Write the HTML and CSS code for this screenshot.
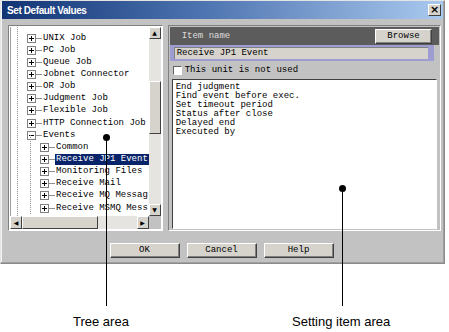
FILE: index.html
```html
<!DOCTYPE html>
<html>
	<head>
		<link rel="stylesheet" href="styles.css">
	</head>
	<body>
	<div class="page">
		<div class="dialog">
			<div class="titlebar">
				<span class="title">Set Default Values</span>
				<span class="closeBtn">&#215;</span>
			</div>
			<div class="main">
				<div class="treePanel">
					<div class="treeView">
						<div class="rootLine"></div>
						<div class="row"><span class="box plus"></span><span class="dash"></span><span class="label">UNIX Job</span></div>
						<div class="row"><span class="box plus"></span><span class="dash"></span><span class="label">PC Job</span></div>
						<div class="row"><span class="box plus"></span><span class="dash"></span><span class="label">Queue Job</span></div>
						<div class="row"><span class="box plus"></span><span class="dash"></span><span class="label">Jobnet Connector</span></div>
						<div class="row"><span class="box plus"></span><span class="dash"></span><span class="label">OR Job</span></div>
						<div class="row"><span class="box plus"></span><span class="dash"></span><span class="label">Judgment Job</span></div>
						<div class="row"><span class="box plus"></span><span class="dash"></span><span class="label">Flexible Job</span></div>
						<div class="row"><span class="box plus"></span><span class="dash"></span><span class="label">HTTP Connection Job</span></div>
						<div class="row"><span class="box minus"></span><span class="dash"></span><span class="label">Events</span></div>
						<div class="children">
							<div class="row sub"><span class="box plus"></span><span class="dash"></span><span class="label">Common</span></div>
							<div class="row sub"><span class="box plus"></span><span class="dash"></span><span class="label selected">Receive JP1 Event</span></div>
							<div class="row sub"><span class="box plus"></span><span class="dash"></span><span class="label">Monitoring Files</span></div>
							<div class="row sub"><span class="box plus"></span><span class="dash"></span><span class="label">Receive Mail</span></div>
							<div class="row sub"><span class="box plus"></span><span class="dash"></span><span class="label">Receive MQ Messag</span></div>
							<div class="row sub"><span class="box plus"></span><span class="dash"></span><span class="label">Receive MSMQ Mess</span></div>
						</div>
					</div>
					<div class="vscroll">
						<span class="arrowBtn">&#9650;</span>
						<span class="vtrack"><span class="vthumb"></span></span>
						<span class="arrowBtn">&#9660;</span>
					</div>
					<div class="hscroll">
						<span class="arrowBtn">&#9664;</span>
						<span class="htrack"><span class="hthumb"></span></span>
						<span class="arrowBtn">&#9654;</span>
					</div>
					<div class="corner"></div>
				</div>
				<div class="settingPanel">
					<div class="itemHeader">
						<span class="itemName">Item name</span>
						<span class="btn browseBtn">Browse</span>
					</div>
					<div class="nameFrame">
						<div class="nameInput">Receive JP1 Event</div>
					</div>
					<div class="checkRow">
						<span class="checkbox"></span>
						<span>This unit is not used</span>
					</div>
					<div class="itemList">
						<div>End judgment</div>
						<div>Find event before exec.</div>
						<div>Set timeout period</div>
						<div>Status after close</div>
						<div>Delayed end</div>
						<div>Executed by</div>
					</div>
				</div>
			</div>
			<div class="buttons">
				<span class="btn">OK</span>
				<span class="btn">Cancel</span>
				<span class="btn">Help</span>
			</div>
		</div>

		<div class="callout treeCallout">
			<span class="dot"></span>
			<span class="stem"></span>
		</div>
		<div class="callout settingCallout">
			<span class="dot"></span>
			<span class="stem"></span>
		</div>
		<div class="captions">
			<span class="caption treeCaption">Tree area</span>
			<span class="caption settingCaption">Setting item area</span>
		</div>
	</div>
	</body>
</html>
```

FILE: styles.css
```css
body{
	margin: 0;
	background-color: #ffffff;
	font-family: "Liberation Mono", monospace;
	font-size: 9px;
	color: #000000;
}
.page{
	position: relative;
	width: 449px;
	height: 332px;
}
.dialog{
	width: 445px;
	height: 264px;
	box-sizing: border-box;
	background-color: #c2c2c2;
	border: 1px solid #8a8a8a;
	border-top-color: #e4e4e4;
	border-left-color: #e4e4e4;
	box-shadow: inset -1px -1px 0 #a0a0a0, inset 1px 1px 0 #f4f4f4;
	display: flex;
	flex-direction: column;
}
.titlebar{
	height: 18px;
	margin: 0 1px;
	background: linear-gradient(to right, #123474 0%, #4d73b0 45%, #a9c9ee 100%);
	display: flex;
	align-items: center;
	justify-content: space-between;
	padding: 0 2px 0 5px;
}
.title{
	font-family: "Liberation Sans", Arial, sans-serif;
	font-weight: bold;
	font-size: 10px;
	letter-spacing: -0.4px;
	color: #ffffff;
}
.closeBtn{
	width: 13px;
	height: 12px;
	box-sizing: border-box;
	background-color: #d6d3cc;
	border: 1px solid #404040;
	border-top-color: #ffffff;
	border-left-color: #ffffff;
	font-family: "DejaVu Sans", sans-serif;
	font-weight: bold;
	font-size: 11px;
	line-height: 9px;
	text-align: center;
}
.main{
	display: flex;
	gap: 5px;
	padding: 6px 3px 0 7px;
}
.treePanel{
	width: 155px;
	height: 206px;
	box-sizing: border-box;
	border: 1px solid #ffffff;
	border-top-color: #808080;
	border-left-color: #808080;
	background-color: #ffffff;
	display: grid;
	grid-template-columns: 1fr 12px;
	grid-template-rows: 1fr 13px;
	padding: 1px;
}
.treeView{
	position: relative;
	overflow: hidden;
	padding-top: 5px;
	border-left: 1px solid #a0a0a0;
}
.rootLine{
	position: absolute;
	left: 6px;
	top: 0;
	bottom: 0;
	border-left: 1px dotted #909090;
}
.row{
	height: 12.15px;
	display: flex;
	align-items: center;
	padding-left: 16px;
	white-space: nowrap;
}
.row.sub{
	padding-left: 29px;
}
.children{
	position: relative;
}
.children::before{
	content: "";
	position: absolute;
	left: 19px;
	top: -6px;
	bottom: 0;
	border-left: 1px dotted #909090;
}
.box{
	position: relative;
	width: 7px;
	height: 7px;
	border: 1px solid #808080;
	background-color: #ffffff;
	flex: none;
}
.box::before{
	content: "";
	position: absolute;
	left: 1px;
	top: 3px;
	width: 5px;
	height: 1px;
	background-color: #000000;
}
.box.plus::after{
	content: "";
	position: absolute;
	left: 3px;
	top: 1px;
	width: 1px;
	height: 5px;
	background-color: #000000;
}
.dash{
	width: 6px;
	border-top: 1px solid #909090;
	flex: none;
}
.label{
	padding: 0 1px 0 1px;
	line-height: 11px;
}
.label.selected{
	background-color: #0a246a;
	color: #ffffff;
}
.vscroll{
	display: flex;
	flex-direction: column;
	background-color: #e6e4e0;
}
.vtrack{
	flex: 1;
	padding-top: 42px;
}
.vthumb{
	display: block;
	height: 53px;
	box-sizing: border-box;
	background-color: #d6d3cc;
	border: 1px solid #404040;
	border-top-color: #ffffff;
	border-left-color: #ffffff;
}
.hscroll{
	display: flex;
	background-color: #e6e4e0;
}
.htrack{
	flex: 1;
}
.hthumb{
	display: block;
	width: 76px;
	height: 100%;
	box-sizing: border-box;
	background-color: #d6d3cc;
	border: 1px solid #404040;
	border-top-color: #ffffff;
	border-left-color: #ffffff;
}
.arrowBtn{
	width: 12px;
	height: 12px;
	flex: none;
	box-sizing: border-box;
	background-color: #d6d3cc;
	border: 1px solid #404040;
	border-top-color: #ffffff;
	border-left-color: #ffffff;
	font-family: "DejaVu Sans", sans-serif;
	font-size: 6px;
	line-height: 10px;
	text-align: center;
}
.hscroll .arrowBtn{
	height: 13px;
	line-height: 11px;
}
.corner{
	background-color: #c2c2c2;
}
.settingPanel{
	width: 274px;
	height: 206px;
	box-sizing: border-box;
	border: 1px solid #ffffff;
	border-top-color: #808080;
	border-left-color: #808080;
	padding: 1px;
	display: flex;
	flex-direction: column;
}
.itemHeader{
	height: 18px;
	background-color: #5c5c5c;
	display: flex;
	align-items: center;
	justify-content: space-between;
	padding: 0 7px 0 12px;
}
.itemName{
	color: #dcdcdc;
}
.btn{
	display: inline-block;
	box-sizing: border-box;
	height: 15px;
	line-height: 12px;
	text-align: center;
	background-color: #d6d3cc;
	border: 1px solid #404040;
	border-top-color: #ffffff;
	border-left-color: #ffffff;
	box-shadow: inset -1px -1px 0 #808080;
}
.browseBtn{
	width: 57px;
}
.nameFrame{
	background-color: #9d9dd2;
	padding: 2px 6px 2px 4px;
	margin-right: 5px;
}
.nameInput{
	height: 12px;
	line-height: 11px;
	box-sizing: border-box;
	background-color: #d6d3cc;
	border-top: 1px solid #808080;
	border-left: 1px solid #808080;
	padding-left: 2px;
}
.checkRow{
	height: 18px;
	display: flex;
	align-items: center;
	gap: 3px;
	padding-left: 3px;
}
.checkbox{
	width: 9px;
	height: 9px;
	box-sizing: border-box;
	background-color: #ffffff;
	border: 1px solid #ffffff;
	border-top-color: #606060;
	border-left-color: #606060;
}
.itemList{
	flex: 1;
	margin: 0 2px;
	background-color: #ffffff;
	border: 1px solid #ffffff;
	border-top-color: #404040;
	border-left-color: #404040;
	padding: 3px;
	line-height: 9px;
}
.buttons{
	display: flex;
	justify-content: center;
	gap: 7px;
	margin-top: 12px;
	padding-right: 2px;
}
.buttons .btn{
	width: 70px;
}
.callout{
	position: absolute;
	width: 7px;
	display: flex;
	flex-direction: column;
	align-items: center;
}
.treeCallout{
	left: 103px;
	top: 134px;
	height: 172px;
}
.settingCallout{
	left: 339px;
	top: 185px;
	height: 121px;
}
.dot{
	width: 7px;
	height: 7px;
	border-radius: 50%;
	background-color: #000000;
	flex: none;
}
.stem{
	flex: 1;
	width: 1px;
	background-color: #000000;
}
.captions{
	position: absolute;
	left: 0;
	top: 314px;
	width: 449px;
	font-family: "Liberation Sans", Arial, sans-serif;
	font-size: 13px;
}
.caption{
	position: absolute;
	top: 0;
	white-space: nowrap;
}
.treeCaption{
	left: 73px;
}
.settingCaption{
	left: 292px;
}
```
